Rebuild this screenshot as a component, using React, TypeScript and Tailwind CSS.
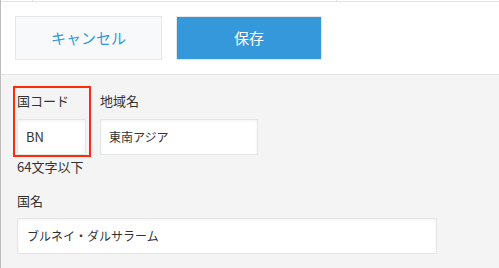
export default function App() {
  return (
    <div
      className="w-[499px] h-[268px] overflow-hidden bg-[#f4f4f4] border-l-[1.5px] border-[#bdbdbd] text-[#333333]"
      style={{ fontFamily: '"Noto Sans CJK JP", "Noto Sans", sans-serif' }}
    >
      {/* top strip */}
      <div className="flex h-px bg-white">
        <div className="w-[31px]" />
        <div className="w-px bg-[#dcdcdc]" />
        <div className="w-[303px]" />
        <div className="w-px bg-[#dcdcdc]" />
      </div>
      <div className="h-px bg-[#e3e3e3]" />

      {/* action bar */}
      <div className="flex gap-[14px] bg-white px-[14px] py-[14px] border-b border-[#e4e4e4]">
        <button className="flex h-[44px] w-[147px] items-center justify-center border border-[#e3e7e8] bg-[#f7f9fa] text-[15px] text-[#3498db]">
          キャンセル
        </button>
        <button className="flex h-[44px] w-[146px] items-center justify-center border border-[#e3e7e8] bg-[#3498db] text-[15px] text-white">
          保存
        </button>
      </div>

      {/* form */}
      <div className="px-[16px] pt-[16px] text-[13px]">
        <div className="flex gap-[14px]">
          <div className="relative w-[69px]">
            <div className="pointer-events-none absolute -left-[4px] -right-[5px] -top-[5px] -bottom-[2px] border-2 border-[#ff2a0a]" />
            <div className="leading-[20px]">国コード</div>
            <div className="mt-[8px] flex h-[36px] items-center border border-[#e3e7e8] bg-white px-[8px] text-[13px] shadow-[inset_0_1px_3px_rgba(0,0,0,0.06)]">
              BN
            </div>
          </div>
          <div className="w-[158px]">
            <div className="leading-[20px]">地域名</div>
            <div className="mt-[8px] flex h-[36px] items-center border border-[#e3e7e8] bg-white px-[8px] text-[12px] shadow-[inset_0_1px_3px_rgba(0,0,0,0.06)]">
              東南アジア
            </div>
          </div>
        </div>
        <div className="mt-[2px] leading-[20px]">64文字以下</div>

        <div className="mt-[14px] leading-[20px]">国名</div>
        <div className="mt-[7px] flex h-[36px] w-[420px] items-center border border-[#e3e7e8] bg-white px-[9px] text-[12px] shadow-[inset_0_1px_3px_rgba(0,0,0,0.06)]">
          ブルネイ・ダルサラーム
        </div>
      </div>
    </div>
  );
}
